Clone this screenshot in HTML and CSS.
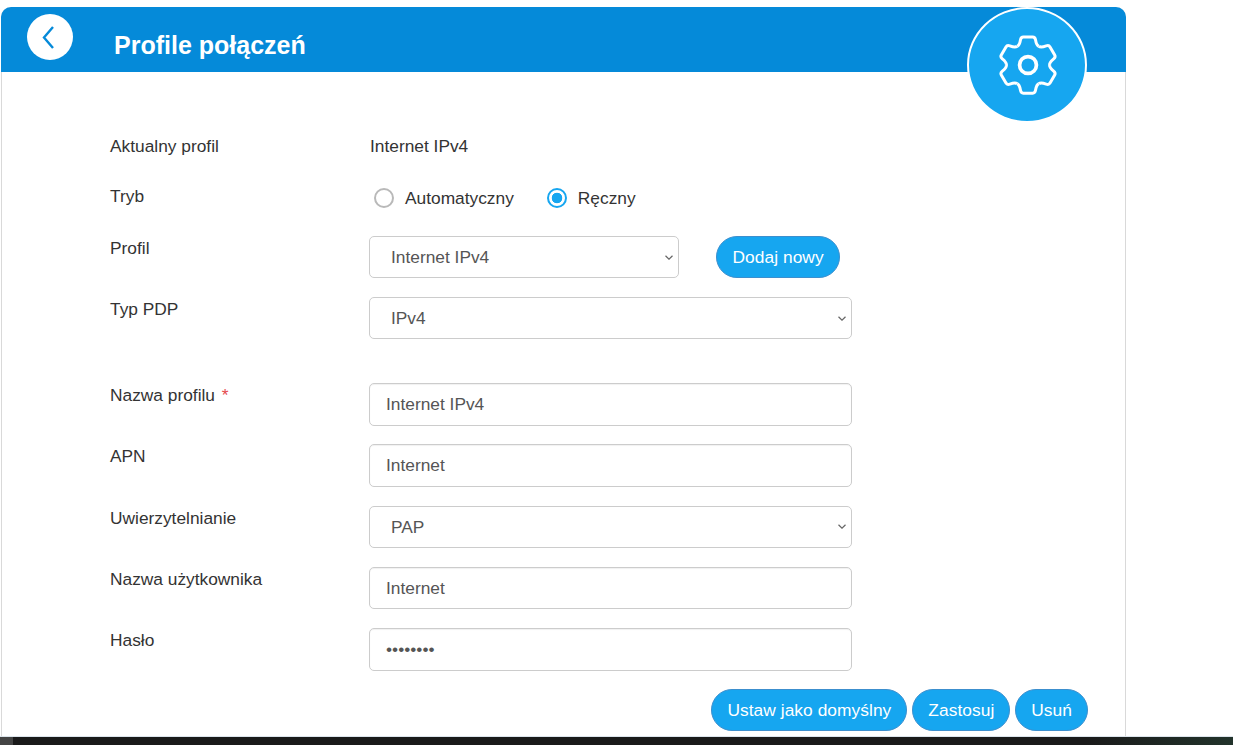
FILE: index.html
```html
<!DOCTYPE html>
<html lang="pl">
<head>
<meta charset="utf-8">
<title>Profile połączeń</title>
<link rel="stylesheet" href="styles.css">
</head>
<body>
<main class="card">
  <header class="card-head">
    <button class="back" type="button" aria-label="Wstecz">
      <svg class="back-icon" viewBox="0 0 46 46" width="46" height="46"><path d="M26 13 17 23.5 26 34"/></svg>
    </button>
    <h1 class="title">Profile połączeń</h1>
    <div class="badge">
      <svg class="gear" viewBox="-32 -32 64 64" width="60" height="60">
        <defs><path id="tooth" d="M-11.5-20C-9-21-8.5-24-8-27Q-7.5-30-5-30L5-30Q7.5-30 8-27C8.5-24 9-21 11.5-20"/></defs>
        <use href="#tooth"/>
        <use href="#tooth" transform="rotate(60)"/>
        <use href="#tooth" transform="rotate(120)"/>
        <use href="#tooth" transform="rotate(180)"/>
        <use href="#tooth" transform="rotate(240)"/>
        <use href="#tooth" transform="rotate(300)"/>
        <circle class="hub" r="9"/>
      </svg>
    </div>
  </header>
  <form class="form">
    <div class="row row-info">
      <span class="label">Aktualny profil</span>
      <span class="value">Internet IPv4</span>
    </div>
    <div class="row row-mode">
      <span class="label">Tryb</span>
      <div class="radios">
        <label class="radio"><input type="radio" name="mode"><span>Automatyczny</span></label>
        <label class="radio"><input type="radio" name="mode" checked><span>Ręczny</span></label>
      </div>
    </div>
    <div class="row">
      <label class="label">Profil</label>
      <select class="field field-short"><option>Internet IPv4</option></select>
      <button class="btn btn-add" type="button">Dodaj nowy</button>
    </div>
    <div class="row row-last-group">
      <label class="label">Typ PDP</label>
      <select class="field"><option>IPv4</option></select>
    </div>
    <div class="row">
      <label class="label">Nazwa profilu <span class="req">*</span></label>
      <input class="field" type="text" value="Internet IPv4">
    </div>
    <div class="row">
      <label class="label">APN</label>
      <input class="field" type="text" value="Internet">
    </div>
    <div class="row">
      <label class="label">Uwierzytelnianie</label>
      <select class="field"><option>PAP</option></select>
    </div>
    <div class="row">
      <label class="label">Nazwa użytkownika</label>
      <input class="field" type="text" value="Internet">
    </div>
    <div class="row">
      <label class="label">Hasło</label>
      <input class="field" type="password" value="internet">
    </div>
    <div class="actions">
      <button class="btn" type="button">Ustaw jako domyślny</button>
      <button class="btn" type="button">Zastosuj</button>
      <button class="btn" type="button">Usuń</button>
    </div>
  </form>
</main>
<div class="taskbar"><span class="taskbar-start"></span></div>
</body>
</html>
```
FILE: styles.css
```css
* { box-sizing: border-box; }
html, body { height: 100%; }
body {
  margin: 0;
  padding-top: 7px;
  background: #fff;
  color: #333;
  font-family: "Liberation Sans", Arial, sans-serif;
  font-size: 17.33px;
  overflow: hidden;
  display: flex;
  flex-direction: column;
}
.card {
  width: 1125px;
  height: 729px;
  margin-left: 1px;
  border-right: 1px solid #d9d9d9;
  border-left: 1px solid #d9d9d9;
  border-radius: 10px 10px 0 0;
  flex: none;
}
.card-head {
  position: relative;
  display: flex;
  align-items: flex-start;
  height: 65px;
  margin: 0 -1px;
  padding: 7px 0 0 26px;
  background: #058ad9;
  border-radius: 10px 10px 0 0;
}
.back {
  width: 46px;
  height: 46px;
  padding: 0;
  border: 0;
  border-radius: 50%;
  background: #fff;
  flex: none;
}
.back-icon { display: block; fill: none; stroke: #058ad9; stroke-width: 2.4; }
.title {
  margin: 16px 0 0 41px;
  color: #fff;
  font-size: 25px;
  line-height: 30px;
  font-weight: 700;
}
.badge {
  position: absolute;
  top: 0;
  left: 966px;
  width: 120px;
  height: 116px;
  display: flex;
  align-items: center;
  justify-content: center;
  background: #16a6f0;
  border: 2px solid #fff;
  border-radius: 50%;
}
.gear { margin-left: 2px; fill: none; stroke: #fff; stroke-width: 3.2; }
.hub { stroke-width: 4; }
.form { padding: 60px 0 0 107px; }
.row {
  display: flex;
  align-items: flex-start;
  min-height: 42.5px;
  margin-bottom: 18.75px;
}
.row-info { align-items: center; min-height: 0; margin-bottom: 24px; line-height: 28px; }
.row-info .label { padding-top: 0; }
.row-mode { min-height: 0; margin-bottom: 26px; line-height: 24px; }
.row-mode .label { padding-top: 0; line-height: 24px; }
.row-last-group { margin-bottom: 43.25px; }
.label {
  width: 260px;
  flex: none;
  padding: 1px 0 0 1px;
  line-height: 22px;
  color: #333;
}
.req { color: #e5484d; margin-left: 2px; }
.value { color: #333; padding-left: 1px; }
.radios { display: flex; gap: 33px; padding: 2px 0 0 5px; }
.radio { display: flex; align-items: center; gap: 11px; }
.radio input {
  appearance: none;
  width: 20px;
  height: 20px;
  margin: 0;
  border: 2px solid #b9b9b9;
  border-radius: 50%;
  background: #fff;
}
.radio input:checked {
  border-color: #16a6f0;
  background: radial-gradient(circle, #16a6f0 0 5px, #fff 5.6px);
}
.field {
  width: 483px;
  height: 42.5px;
  border: 1px solid #ccc;
  border-radius: 5px;
  background: #fff;
  color: #555;
  font: 17.33px "Liberation Sans", Arial, sans-serif;
  padding: 0 16px;
  box-shadow: inset 0 1px 1px rgba(0,0,0,.06);
  flex: none;
}
select.field {
  height: 42px;
  padding-left: 21px;
  box-shadow: none;
  appearance: none;
  background: #fff url("data:image/svg+xml,%3Csvg xmlns='http://www.w3.org/2000/svg' width='8' height='5'%3E%3Cpath d='M.5.8 4 4.2 7.500.8' fill='none' stroke='%23666' stroke-width='1.2'/%3E%3C/svg%3E") no-repeat right 5px center;
}
.field-short { width: 310px; }
.btn {
  height: 42px;
  padding: 0 15px;
  border: 1px solid #3c8fce;
  border-radius: 21px;
  background: #16a6f0;
  color: #fff;
  font: 17.33px "Liberation Sans", Arial, sans-serif;
  letter-spacing: .06px;
}
.btn-add { margin-left: 37px; padding: 0 15.5px; }
.actions {
  display: flex;
  justify-content: flex-end;
  gap: 5px;
  width: 979px;
}
.taskbar {
  position: relative;
  flex: 1;
  border-top: 1px solid #dde5ec;
  background: linear-gradient(90deg, #1a1a1a 0 88%, #22332b 100%);
}
.taskbar-start {
  display: block;
  width: 13px;
  height: 100%;
  background: #444;
}
```
